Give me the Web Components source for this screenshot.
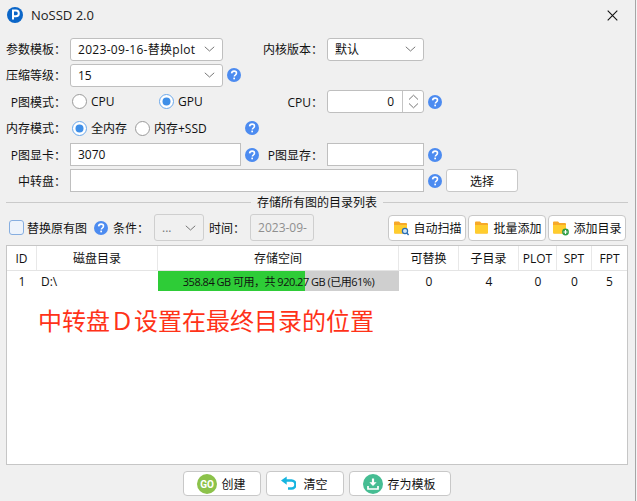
<!DOCTYPE html>
<html>
<head>
<meta charset="utf-8">
<title>NoSSD 2.0</title>
<style>
html, body { margin: 0; padding: 0; background: #f4f4f4; }
body { font: 12px "Open Sans", "Noto Sans CJK SC", sans-serif; color: #111; width: 637px; height: 501px; overflow: hidden; }
</style>
</head>
<body>
<nossd-window></nossd-window>

<script>
const field = `
    box-sizing: border-box;
    height: 23px;
    background: #fff;
    border: 1px solid #bfbfbf;
    display: flex;
    align-items: center;
`;

class HelpIcon extends HTMLElement {
    constructor() {
        super();
        this.attachShadow({ mode: 'open' }).innerHTML = `
            <style>
                :host { display: inline-flex; width: 14px; height: 14px; flex: none; }
                svg { display: block; }
            </style>
            <svg width="14" height="14" viewBox="0 0 14 14">
                <circle cx="7" cy="7" r="7" fill="#4c8bf0"/>
                <path d="M4.6 5.4C4.7 3.9 5.7 3.1 7.1 3.1c1.4 0 2.4.8 2.4 2 0 1-.6 1.5-1.3 2-.6.4-.8.7-.8 1.4" fill="none" stroke="#fff" stroke-width="1.6"/>
                <rect x="6.3" y="9.6" width="1.7" height="1.7" fill="#fff"/>
            </svg>
        `;
    }
}

class FieldLabel extends HTMLElement {
    constructor() {
        super();
        this.attachShadow({ mode: 'open' }).innerHTML = `
            <style>
                :host { display: block; flex: none; text-align: right; white-space: nowrap; }
            </style>
            <slot></slot>
        `;
    }
}

class ComboBox extends HTMLElement {
    constructor() {
        super();
        this.attachShadow({ mode: 'open' }).innerHTML = `
            <style>
                :host { ${field} border-radius: 3px; padding: 0 7px; flex: none; justify-content: space-between; white-space: nowrap; overflow: hidden; }
                :host([disabled]) { background: #f0f0f0; color: #777; border-color: #cfcfcf; }
                svg { flex: none; }
            </style>
            <slot></slot>
            <svg width="11" height="6" viewBox="0 0 11 6"><path d="M.8.8 5.5 5 10.2.8" fill="none" stroke="#777" stroke-width="1"/></svg>
        `;
    }
}

class TextField extends HTMLElement {
    constructor() {
        super();
        this.attachShadow({ mode: 'open' }).innerHTML = `
            <style>
                :host { ${field} padding: 0 7px; flex: none; white-space: nowrap; }
                :host([disabled]) { background: #f0f0f0; color: #8f8f8f; border-color: #cfcfcf; border-radius: 3px; }
            </style>
            <slot></slot>
        `;
    }
}

class SpinBox extends HTMLElement {
    constructor() {
        super();
        this.attachShadow({ mode: 'open' }).innerHTML = `
            <style>
                :host { ${field} border-radius: 3px; flex: none; }
                .value { flex: 1; text-align: right; padding-right: 8px; }
                .arrows { width: 20px; height: 100%; border-left: 1px solid #c4c4c4; display: flex; align-items: center; justify-content: center; }
            </style>
            <div class="value"><slot></slot></div>
            <div class="arrows">
                <svg width="11" height="15" viewBox="0 0 11 15">
                    <path d="M1 5.5 5.5 1.2 10 5.5M1 9.5 5.5 13.8 10 9.5" fill="none" stroke="#777"/>
                </svg>
            </div>
        `;
    }
}

class RadioOption extends HTMLElement {
    constructor() {
        super();
        const dot = this.hasAttribute('checked') ? '<circle cx="7.5" cy="7.5" r="4" fill="#3f8fe8"/>' : '';
        const ring = this.hasAttribute('checked') ? '#6aa7ea' : '#9a9a9a';
        this.attachShadow({ mode: 'open' }).innerHTML = `
            <style>
                :host { display: inline-flex; align-items: center; gap: 4px; flex: none; white-space: nowrap; }
                svg { flex: none; }
            </style>
            <svg width="15" height="15" viewBox="0 0 15 15">
                <circle cx="7.5" cy="7.5" r="7" fill="#fff" stroke="${ring}"/>${dot}
            </svg>
            <slot></slot>
        `;
    }
}

class PushButton extends HTMLElement {
    constructor() {
        super();
        this.attachShadow({ mode: 'open' }).innerHTML = `
            <style>
                :host {
                    box-sizing: border-box;
                    display: flex;
                    align-items: center;
                    justify-content: center;
                    gap: 4px;
                    flex: none;
                    height: 26px;
                    background: #fff;
                    border: 1px solid #c8c8c8;
                    border-radius: 4px;
                    white-space: nowrap;
                }
            </style>
            <slot name="icon"></slot>
            <slot></slot>
        `;
    }
}

class FormRow extends HTMLElement {
    constructor() {
        super();
        this.attachShadow({ mode: 'open' }).innerHTML = `
            <style>
                :host { display: flex; align-items: center; height: 23px; }
            </style>
            <slot></slot>
        `;
    }
}

class TitleBar extends HTMLElement {
    constructor() {
        super();
        this.attachShadow({ mode: 'open' }).innerHTML = `
            <style>
                :host { display: flex; align-items: center; height: 30px; padding-left: 7px; font-size: 13px; color: #222; }
                .title { margin-left: 8px; flex: 1; }
                .close { width: 11px; height: 11px; margin-right: 17px; }
            </style>
            <svg width="16" height="16" viewBox="0 0 16 16">
                <circle cx="8" cy="8" r="8" fill="#0b66c8"/>
                <path d="M6 12.5V3.6h3a2.8 2.8 0 0 1 0 5.6H6" fill="none" stroke="#fff" stroke-width="2"/>
            </svg>
            <span class="title">NoSSD 2.0</span>
            <svg class="close" viewBox="0 0 11 11"><path d="M.7.7 10.3 10.3M10.3.7.7 10.3" stroke="#111" stroke-width="1.1"/></svg>
        `;
    }
}

class GroupRule extends HTMLElement {
    constructor() {
        super();
        this.attachShadow({ mode: 'open' }).innerHTML = `
            <style>
                :host { display: flex; align-items: center; gap: 6px; height: 14px; }
                i { flex: 1; height: 1px; background: #cacaca; }
            </style>
            <i></i><slot></slot><i></i>
        `;
    }
}

class DriveTable extends HTMLElement {
    constructor() {
        super();
        this.attachShadow({ mode: 'open' }).innerHTML = `
            <style>
                :host { display: block; box-sizing: border-box; height: 220px; background: #fff; border: 1px solid #c6c6c6; }
                .row { display: grid; grid-template-columns: 30px 121px 241px 60px 60px 38px 35px 1fr; align-items: center; }
                .head { height: 24px; border-bottom: 1px solid #e4e4e4; text-align: center; }
                .head span { height: 100%; display: flex; align-items: center; justify-content: center; border-right: 1px solid #e8e8e8; white-space: nowrap; }
                .head span:last-child { border-right: 0; }
                .body { height: 20px; text-align: center; }
                .path { text-align: left; padding-left: 4px; }
                .bar { height: 20px; background: linear-gradient(to right, #2ecc37 147px, #cfcfcf 147px); display: flex; align-items: center; justify-content: center; font-size: 11px; letter-spacing: -.5px; white-space: nowrap; }
                .note { margin: 13px 0 0 31px; font-size: 24px; line-height: 34px; color: #ff3218; white-space: pre; }
            </style>
            <div class="row head">
                <span>ID</span><span>磁盘目录</span><span>存储空间</span><span>可替换</span><span>子目录</span><span>PLOT</span><span>SPT</span><span>FPT</span>
            </div>
            <div class="row body">
                <span>1</span><span class="path">D:\\</span>
                <div class="bar">358.84 GB 可用，共 920.27 GB (已用61%)</div>
                <span>0</span><span>4</span><span>0</span><span>0</span><span>5</span>
            </div>
            <div class="note">中转盘Ｄ设置在最终目录的位置</div>
        `;
    }
}

// folder drawn 13px wide starting at x, badge goes over its lower right corner
const folder = (x, badge = '') => `
    <svg slot="icon" width="17" height="16" viewBox="0 0 17 16">
        <g transform="translate(${x} 1.5)">
            <path d="M0 1a1 1 0 0 1 1-1h4l1.5 1.5H12a1 1 0 0 1 1 1V11a1 1 0 0 1-1 1H1a1 1 0 0 1-1-1z" fill="#f7a928"/>
            <path d="M0 3.5h13V11a1 1 0 0 1-1 1H1a1 1 0 0 1-1-1z" fill="#ffcd2e"/>
        </g>
        ${badge}
    </svg>
`;

class NossdWindow extends HTMLElement {
    constructor() {
        super();
        this.attachShadow({ mode: 'open' }).innerHTML = `
            <style>
                :host { display: block; box-sizing: border-box; width: 636px; height: 501px; background: #f0f0f0; border-right: 1px solid #a6a6a6; }
                .form { display: flex; flex-direction: column; gap: 3.4px; padding: 7.5px 0 0 6px; }
                field-label { width: 60px; margin-right: 4px; }
                .list { margin: 3px 7px 0 6px; }
                .tools { display: flex; align-items: center; height: 27px; margin: 5px 9px 4px 9px; }
                .tools help-icon { margin-left: 7px; }
                .check { box-sizing: border-box; width: 15px; height: 15px; background: #edf3fb; border: 1px solid #86aee0; border-radius: 3px; margin-right: 3px; flex: none; }
                .main { margin: 0 7px 0 6px; }
                .actions { display: flex; justify-content: center; gap: 5px; padding: 6px 2px 0 0; }
                .actions push-button { height: 25px; }
            </style>
            <title-bar></title-bar>
            <div class="form">
                <form-row>
                    <field-label>参数模板：</field-label>
                    <combo-box style="width:153px"><span style="letter-spacing:.3px">2023-09-16-替换plot</span></combo-box>
                    <field-label style="width:64px;margin-left:36px">内核版本：</field-label>
                    <combo-box style="width:97px">默认</combo-box>
                </form-row>
                <form-row>
                    <field-label>压缩等级：</field-label>
                    <combo-box style="width:153px">15</combo-box>
                    <help-icon style="margin-left:4px"></help-icon>
                </form-row>
                <form-row>
                    <field-label>P图模式：</field-label>
                    <radio-option style="width:87px;margin-left:2px">CPU</radio-option>
                    <radio-option checked style="width:64px">GPU</radio-option>
                    <field-label style="width:100px">CPU：</field-label>
                    <spin-box style="width:97px">0</spin-box>
                    <help-icon style="margin-left:4px"></help-icon>
                </form-row>
                <form-row>
                    <field-label>内存模式：</field-label>
                    <radio-option checked style="width:63px;margin-left:2px">全内存</radio-option>
                    <radio-option style="width:110px">内存+SSD</radio-option>
                    <help-icon></help-icon>
                </form-row>
                <form-row>
                    <field-label>P图显卡：</field-label>
                    <text-field style="width:171px">3070</text-field>
                    <help-icon style="margin-left:4px"></help-icon>
                    <field-label style="width:64px;margin-left:0">P图显存：</field-label>
                    <text-field style="width:97px"></text-field>
                    <help-icon style="margin-left:4px"></help-icon>
                </form-row>
                <form-row>
                    <field-label>中转盘：</field-label>
                    <text-field style="width:354px"></text-field>
                    <help-icon style="margin-left:4px"></help-icon>
                    <push-button style="width:72px;height:23px;margin-left:4px;border-radius:3px">选择</push-button>
                </form-row>
            </div>
            <div class="list"><group-rule>存储所有图的目录列表</group-rule></div>
            <div class="tools">
                <div class="check"></div>
                <span>替换原有图</span>
                <help-icon></help-icon>
                <span style="margin-left:5px">条件：</span>
                <combo-box disabled style="width:50px;height:27px;margin-left:5px">...</combo-box>
                <span style="margin-left:5px">时间：</span>
                <text-field disabled style="width:64px;height:27px;margin-left:5px">2023-09-</text-field>
                <div style="flex:1"></div>
                <push-button style="width:78px">${folder(2, '<circle cx="13" cy="11" r="2.6" fill="#cfe6f8" stroke="#2a6fb5" stroke-width="1.2"/><path d="m14.8 13 1.8 1.9" stroke="#2a6fb5" stroke-width="1.4"/>')}自动扫描</push-button>
                <push-button style="width:78px;margin-left:2px">${folder(3)}批量添加</push-button>
                <push-button style="width:78px;margin-left:2px">${folder(1, '<circle cx="13.5" cy="12" r="3.4" fill="#2e9e45"/><path d="M11.5 12h4M13.5 10v4" stroke="#fff" stroke-width="1.2"/>')}添加目录</push-button>
            </div>
            <div class="main"><drive-table></drive-table></div>
            <div class="actions">
                <push-button style="width:78px">
                    <svg slot="icon" width="20" height="20" viewBox="0 0 20 20">
                        <circle cx="10" cy="10" r="10" fill="#8cc24a"/>
                        <text x="10" y="13.6" text-anchor="middle" font-size="10" font-weight="700" fill="#fff" font-family="Roboto">GO</text>
                    </svg>
                    创建
                </push-button>
                <push-button style="width:78px;gap:7px">
                    <svg slot="icon" width="15" height="15" viewBox="0 0 15 15">
                        <path d="M5 4.5h5.5a3 3 0 0 1 0 8H7" fill="none" stroke="#16b5e0" stroke-width="2.6"/>
                        <path d="M5.7.5 0 4.6l5.7 4.2z" fill="#16b5e0"/>
                    </svg>
                    清空
                </push-button>
                <push-button style="width:102px">
                    <svg slot="icon" width="20" height="20" viewBox="0 0 20 20">
                        <circle cx="10" cy="10" r="10" fill="#46bd93"/>
                        <path d="M10 4.5v5.5" stroke="#fff" stroke-width="2.2"/>
                        <path d="M6.4 8.2h7.2L10 12z" fill="#fff"/>
                        <path d="M5 12v3h10v-3" fill="none" stroke="#fff" stroke-width="1.7"/>
                    </svg>
                    存为模板
                </push-button>
            </div>
        `;
    }
}

customElements.define('help-icon', HelpIcon);
customElements.define('field-label', FieldLabel);
customElements.define('combo-box', ComboBox);
customElements.define('text-field', TextField);
customElements.define('spin-box', SpinBox);
customElements.define('radio-option', RadioOption);
customElements.define('push-button', PushButton);
customElements.define('form-row', FormRow);
customElements.define('title-bar', TitleBar);
customElements.define('group-rule', GroupRule);
customElements.define('drive-table', DriveTable);
customElements.define('nossd-window', NossdWindow);
</script>
</body>
</html>
